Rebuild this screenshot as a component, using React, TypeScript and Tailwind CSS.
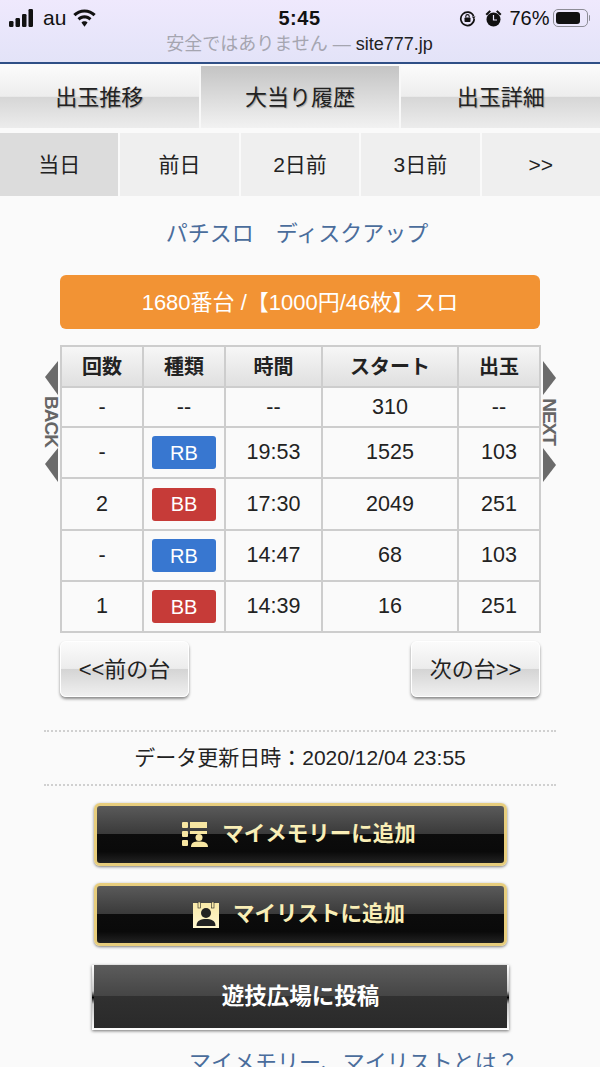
const JP = "font-['Liberation_Sans','Noto_Sans_CJK_JP',sans-serif]";

const rows = [
  { n: "-", t: "--", time: "--", s: "310", o: "--", h: "h-10" },
  { n: "-", t: "RB", time: "19:53", s: "1525", o: "103", h: "h-[51px]" },
  { n: "2", t: "BB", time: "17:30", s: "2049", o: "251", h: "h-[52px]" },
  { n: "-", t: "RB", time: "14:47", s: "68", o: "103", h: "h-[51px]" },
  { n: "1", t: "BB", time: "14:39", s: "16", o: "251", h: "h-[51px]" },
];

function Arrow({ dir }: { dir: "left" | "right" }) {
  return (
    <svg width="13" height="34" viewBox="0 0 13 34" className="block">
      <path d={dir === "left" ? "M13 0V34L0 16Z" : "M0 0V34L13 17Z"} fill="#6b6b6b" />
    </svg>
  );
}

function Side({ dir, label }: { dir: "left" | "right"; label: string }) {
  return (
    <div className="absolute top-[16px] flex w-[13px] flex-col items-center" style={dir === "left" ? { left: -15 } : { right: -16 }}>
      <Arrow dir={dir} />
      <div className="flex h-[53px] items-center justify-center">
        <span className="rotate-90 text-[19px] font-bold leading-none tracking-[-1px] whitespace-nowrap text-[#666]">{label}</span>
      </div>
      <Arrow dir={dir} />
    </div>
  );
}

function Tab({ label, active }: { label: string; active?: boolean }) {
  return (
    <div
      className={`flex flex-1 items-center justify-center border-r-2 border-[#f8f8f8] text-[22px] text-[#222] [text-shadow:1px_1px_1px_rgba(0,0,0,0.25)] last:border-r-0 ${
        active
          ? "bg-gradient-to-b from-[#c4c4c4] to-[#f2f2f2]"
          : "bg-[linear-gradient(#fbfbfb_0%,#ededed_49%,#d6d6d6_50%,#ececec_100%)]"
      }`}
    >
      {label}
    </div>
  );
}

function SubTab({ label, active }: { label: string; active?: boolean }) {
  return (
    <div className={`flex flex-1 items-center justify-center border-r-2 border-[#fafafa] text-[21px] text-[#222] last:border-r-0 ${active ? "bg-[#dcdcdc]" : "bg-[#efefef]"}`}>
      {label}
    </div>
  );
}

function NavBtn({ label }: { label: string }) {
  return (
    <div className="flex h-[56px] w-[129px] items-center justify-center rounded-md border border-white bg-[linear-gradient(#fbfbfb_0%,#ececec_49%,#d4d4d4_50%,#f0f0f0_100%)] text-[22px] text-[#222] shadow-[0_2px_3px_rgba(0,0,0,0.45)]">
      {label}
    </div>
  );
}

function GoldBtn({ icon, label }: { icon: React.ReactNode; label: string }) {
  return (
    <div className="flex h-[63px] items-center justify-center gap-[14px] rounded-md border-[3px] border-[#e7cd7d] bg-[linear-gradient(#5a5a5a_0%,#3a3a3a_49%,#0c0c0c_50%,#0a0a0a_80%,#222_100%)] pr-[3px] text-[21.500px] font-bold text-[#f9eeb6] shadow-[0_1px_3px_rgba(0,0,0,0.5)]">
      {icon}
      <span>{label}</span>
    </div>
  );
}

export default function App() {
  return (
    <div className={`h-[1067px] w-[600px] overflow-hidden bg-[#fafafa] ${JP}`}>
      {/* status + address */}
      <div className="h-[64px] border-b-[2px] border-[#2f4f86] bg-gradient-to-b from-[#efe9fd] to-[#e3e3f8] pl-[9px] pr-[10px]">
        <div className="flex h-[36px] items-center justify-between">
          <div className="flex w-[200px] items-center">
            <svg width="25" height="18" viewBox="0 0 25 18" fill="#111">
              <rect x="0" y="12" width="4.500" height="6" rx="1.200" />
              <rect x="6.500" y="9" width="4.500" height="9" rx="1.200" />
              <rect x="13" y="5" width="4.500" height="13" rx="1.200" />
              <rect x="19.500" y="0" width="4.500" height="18" rx="1.200" />
            </svg>
            <span className="ml-[9px] text-[21px] text-[#111]">au</span>
            <svg width="23" height="18" viewBox="0 0 24 18" className="ml-[7px]" fill="#111">
              <path d="M12 0C7.400 0 3.300 1.800 0.300 4.800L2.600 7.200C5 4.800 8.300 3.300 12 3.300S19 4.800 21.400 7.200L23.700 4.800C20.700 1.800 16.600 0 12 0Z" />
              <path d="M12 6.200C9.200 6.200 6.600 7.300 4.700 9.200L7 11.500C8.300 10.200 10.100 9.500 12 9.500S15.700 10.200 17 11.500L19.300 9.200C17.400 7.300 14.800 6.200 12 6.200Z" />
              <path d="M12 12.300C10.700 12.300 9.600 12.800 8.800 13.600L12 18L15.200 13.600C14.400 12.800 13.300 12.300 12 12.300Z" />
            </svg>
          </div>
          <div className="text-[20px] font-bold leading-none tracking-[0.5px] text-[#111]">5:45</div>
          <div className="flex w-[200px] items-center justify-end">
            <svg width="17" height="17" viewBox="0 0 17 17" fill="none" stroke="#111" strokeWidth="1.700">
              <path d="M14.600 6A6.700 6.700 0 1 0 15.200 8.500" />
              <path d="M12.800 6.500H16.500L14.600 9Z" fill="#111" stroke="none" />
              <rect x="5.500" y="7.500" width="6" height="4.500" rx="0.800" fill="#111" stroke="none" />
              <path d="M6.800 7.500V6.300A1.700 1.700 0 0 1 10.200 6.300V7.500" strokeWidth="1.100" />
            </svg>
            <svg width="17" height="19" viewBox="0 0 17 19" className="ml-[9px]" fill="#111">
              <circle cx="8.500" cy="10.500" r="7" />
              <path d="M0.500 5L4.500 1.200L6 2.500L2 6.500ZM16.500 5L12.500 1.200L11 2.500L15 6.500Z" />
              <path d="M8.500 6V11H12" stroke="#e9e6fb" strokeWidth="1.200" fill="none" />
            </svg>
            <span className="ml-[7px] text-[20px] text-[#111]">76%</span>
            <div className="ml-[3px] flex h-[18px] w-[35px] items-center rounded-[5px] border border-[#8d8d96] p-[2px]">
              <div className="h-full w-[24px] rounded-[3px] bg-[#111]" />
            </div>
            <div className="ml-[1px] h-[6px] w-[1.500px] rounded-r bg-[#8d8d96]" />
          </div>
        </div>
        <div className="flex h-[16px] items-center justify-center text-[18px] leading-none text-[#a5a5b0]">
          安全ではありません —&nbsp;<span className="text-[#222]">site777.jp</span>
        </div>
      </div>

      {/* main tabs */}
      <div className="mt-[2px] flex h-[62px]">
        <Tab label="出玉推移" />
        <Tab label="大当り履歴" active />
        <Tab label="出玉詳細" />
      </div>

      {/* day tabs */}
      <div className="mt-[5px] flex h-[63px]">
        <SubTab label="当日" active />
        <SubTab label="前日" />
        <SubTab label="2日前" />
        <SubTab label="3日前" />
        <SubTab label=">>" />
      </div>

      <div className="px-[60px]">
        <div className="mt-[24px] pr-[6px] text-center text-[22px] leading-[28px] text-[#4a6d9c]">パチスロ　ディスクアップ</div>
        <div className="mt-[27px] flex h-[54px] items-center justify-center rounded-md bg-[#f29334] text-[22px] text-white">
          1680番台 /【1000円/46枚】スロ
        </div>

        <div className="relative mt-[16px]">
          <Side dir="left" label="BACK" />
          <Side dir="right" label="NEXT" />
          <table className="w-[479px] table-fixed border-collapse border-2 border-[#cdcdcd] text-center text-[21.500px] text-[#222]">
            <colgroup>
              <col className="w-[82px]" />
              <col className="w-[82px]" />
              <col className="w-[97px]" />
              <col className="w-[136px]" />
              <col className="w-[82px]" />
            </colgroup>
            <thead>
              <tr className="h-[41px] bg-gradient-to-b from-[#f7f7f7] to-[#dfdfdf]">
                {["回数", "種類", "時間", "スタート", "出玉"].map((h) => (
                  <th key={h} className="border-2 border-[#cdcdcd] p-0 text-[20px] font-bold">{h}</th>
                ))}
              </tr>
            </thead>
            <tbody>
              {rows.map((r, i) => (
                <tr key={i} className={r.h}>
                  <td className="border-2 border-[#cdcdcd] p-0">{r.n}</td>
                  <td className="border-2 border-[#cdcdcd] p-0">
                    {r.t === "--" ? (
                      r.t
                    ) : (
                      <div className={`mx-auto flex h-[33px] w-[64px] items-center justify-center rounded-[3px] text-[20px] text-white ${r.t === "RB" ? "bg-[#3877d0]" : "bg-[#c63b38]"}`}>
                        {r.t}
                      </div>
                    )}
                  </td>
                  <td className="border-2 border-[#cdcdcd] p-0">{r.time}</td>
                  <td className="border-2 border-[#cdcdcd] p-0">{r.s}</td>
                  <td className="border-2 border-[#cdcdcd] p-0">{r.o}</td>
                </tr>
              ))}
            </tbody>
          </table>
        </div>

        <div className="mt-[8px] flex justify-between">
          <NavBtn label="<<前の台" />
          <NavBtn label="次の台>>" />
        </div>
      </div>

      <div className="mx-[44px] mt-[33px] flex h-[56px] items-center justify-center border-y-2 border-dotted border-[#d0d0d0] text-[21px] text-[#222]">
        データ更新日時：2020/12/04 23:55
      </div>

      <div className="ml-[94px] mr-[93px] mt-[17px] flex flex-col">
        <GoldBtn
          label="マイメモリーに追加"
          icon={
            <svg width="26" height="25" viewBox="0 0 26 25" fill="#f7e6a2">
              <rect x="0" y="0" width="6" height="6" rx="1" />
              <rect x="8" y="0" width="17" height="6" />
              <rect x="0" y="9" width="6" height="6" rx="1" />
              <rect x="8" y="9" width="17" height="3" />
              <rect x="0" y="18" width="6" height="6" rx="1" />
              <circle cx="17" cy="15.500" r="3.500" />
              <path d="M9 25C9 20.500 12 19.500 17 19.500S26 20.500 26 25Z" />
            </svg>
          }
        />
        <div className="mt-[17px]">
          <GoldBtn
            label="マイリストに追加"
            icon={
              <svg width="26" height="26" viewBox="0 0 26 26">
                <defs>
                  <linearGradient id="g" x1="0" y1="0" x2="0" y2="1">
                    <stop offset="0" stopColor="#f8e9a8" />
                    <stop offset="1" stopColor="#fff6cf" />
                  </linearGradient>
                </defs>
                <rect y="1" width="26" height="25" fill="url(#g)" />
                <rect x="5" y="0" width="2.500" height="6" fill="#f8e9a8" stroke="#222" strokeWidth="0.600" />
                <rect x="18.500" y="0" width="2.500" height="6" fill="#f8e9a8" stroke="#222" strokeWidth="0.600" />
                <circle cx="13" cy="11" r="5" fill="#222" />
                <path d="M3.500 24C3.500 18.500 8 17 13 17S22.500 18.500 22.500 24Z" fill="#222" />
              </svg>
            }
          />
        </div>
        <div className="-mx-[2px] mt-[19px] bg-[linear-gradient(#ffffff_0%,#c8c8c8_40%,#000000_50%,#c8c8c8_60%,#ffffff_100%)] px-[2px] pb-[2px] shadow-[0_1px_3px_rgba(0,0,0,0.55)]">
          <div className="flex h-[63px] items-center justify-center bg-[linear-gradient(#5c5c5c_0%,#454545_49%,#303030_50%,#2a2a2a_100%)] text-[22.500px] font-bold text-white">
            遊技広場に投稿
          </div>
        </div>
      </div>

      <div className="mt-[18px] pl-[189px] text-[22px] leading-[30px] whitespace-nowrap text-[#4a6d9c]">マイメモリー、マイリストとは？</div>
    </div>
  );
}
